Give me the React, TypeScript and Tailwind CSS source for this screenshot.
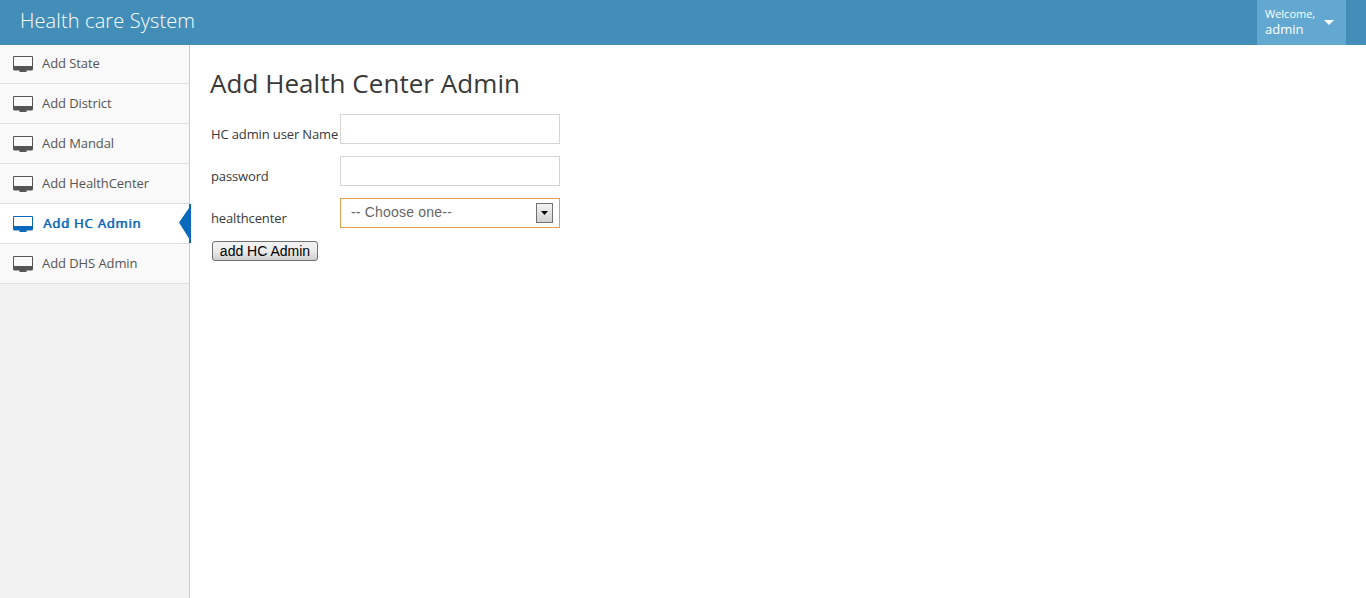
const items = [
  'Add State',
  'Add District',
  'Add Mandal',
  'Add HealthCenter',
  'Add HC Admin',
  'Add DHS Admin',
];

function Monitor() {
  return (
    <svg width="20" height="16" viewBox="0 0 20 16" fill="currentColor" className="mb-px shrink-0">
      <path
        fillRule="evenodd"
        d="M1 0H19Q20 0 20 1V13Q20 14.500 18.500 14.500H13.500V16H6.500V14.500H1.500Q0 14.500 0 13V1Q0 0 1 0ZM1 1V10H19V1Z"
      />
    </svg>
  );
}

function NavItem({ label, active }: { label: string; active: boolean }) {
  return (
    <a
      className={
        'relative flex h-10 items-start border-b border-[#dfdfdf] pl-[13px] pt-3 text-[13px] first:h-[39px] first:pt-[11px] ' +
        (active
          ? 'gap-[10px] bg-white tracking-[0.83px] text-[#0b69bb] [text-shadow:0.8px_0_0_#0b69bb]'
          : 'gap-[9px] bg-[#f9f9f9] tracking-[-0.08px] text-[#555]')
      }
    >
      <Monitor />
      <span className="-mt-[2px] whitespace-nowrap leading-[18px]">{label}</span>
      {active && (
        <svg width="12" height="39" viewBox="0 0 12 39" className="absolute -right-[2px] top-0 z-10">
          <path d="M12 0H10V4L0 18.500L10 34.500V39H12Z" fill="#0b69bb" />
        </svg>
      )}
    </a>
  );
}

export default function App() {
  return (
    <div className="flex h-[598px] w-full flex-col overflow-hidden bg-white font-['Open_Sans',sans-serif] text-[13px] text-[#393939]">
      <header className="flex h-[45px] shrink-0 justify-between bg-[#438eb9] pr-5 text-white">
        <div className="pl-5 pt-[6px] text-[20px] font-light leading-[30px] tracking-[0.12px]">Health care System</div>
        <div className="flex w-[89px] justify-between bg-[#62a8d1] pl-2 pr-[12px]">
          <div className="pt-[6px]">
            <div className="text-[11px] leading-[15px]">Welcome,</div>
            <div className="text-[13px] leading-[17px]">admin</div>
          </div>
          <svg width="10" height="5" viewBox="0 0 10 5" className="mt-5">
            <path d="M0 0H10L5 5Z" fill="#fff" />
          </svg>
        </div>
      </header>
      <div className="flex min-h-0 flex-1">
        <aside className="w-[190px] shrink-0 border-r border-[#ccc] bg-[#f2f2f2]">
          <nav>
            {items.map((label) => (
              <NavItem key={label} label={label} active={label === 'Add HC Admin'} />
            ))}
          </nav>
        </aside>
        <main className="pl-5 pt-[19px]">
          <h1 className="h-[50px] text-[26px] leading-[38px] tracking-[0.05px]">Add Health Center Admin</h1>
          <form className="grid grid-cols-[129px_220px] gap-x-px gap-y-3 tracking-[-0.13px]">
            <label className="pl-px pt-[11px] leading-[18px] whitespace-nowrap">HC admin user Name</label>
            <input className="h-[30px] border border-[#d5d5d5] bg-white outline-none" />
            <label className="pl-px pt-[11px] leading-[18px]">password</label>
            <input type="password" className="h-[30px] border border-[#d5d5d5] bg-white outline-none" />
            <label className="pl-px pt-[11px] leading-[18px]">healthcenter</label>
            <div className="flex h-[30px] items-center justify-between border border-[#e59f4f] pl-[10px] pr-[6px]">
              <span className="pb-px font-['Liberation_Sans',sans-serif] text-[14px] tracking-[0.2px] text-[#666]">-- Choose one--</span>
              <span className="flex h-5 w-[17px] items-center justify-center border border-[#707070] bg-linear-to-b from-[#f2f2f2] to-[#d2d2d2]">
                <svg width="7" height="4" viewBox="0 0 7 4">
                  <path d="M0 0H7L3.500 4Z" fill="#000" />
                </svg>
              </span>
            </div>
            <button
              type="button"
              className="mt-px ml-[2px] flex h-5 w-[106px] items-center justify-center rounded-[3px] border border-[#707070] bg-linear-to-b from-[#f2f2f2] via-[#ebebeb] to-[#cfcfcf] font-['Liberation_Sans',sans-serif] text-[14px] tracking-normal whitespace-nowrap text-black"
            >
              add HC Admin
            </button>
          </form>
        </main>
      </div>
    </div>
  );
}
